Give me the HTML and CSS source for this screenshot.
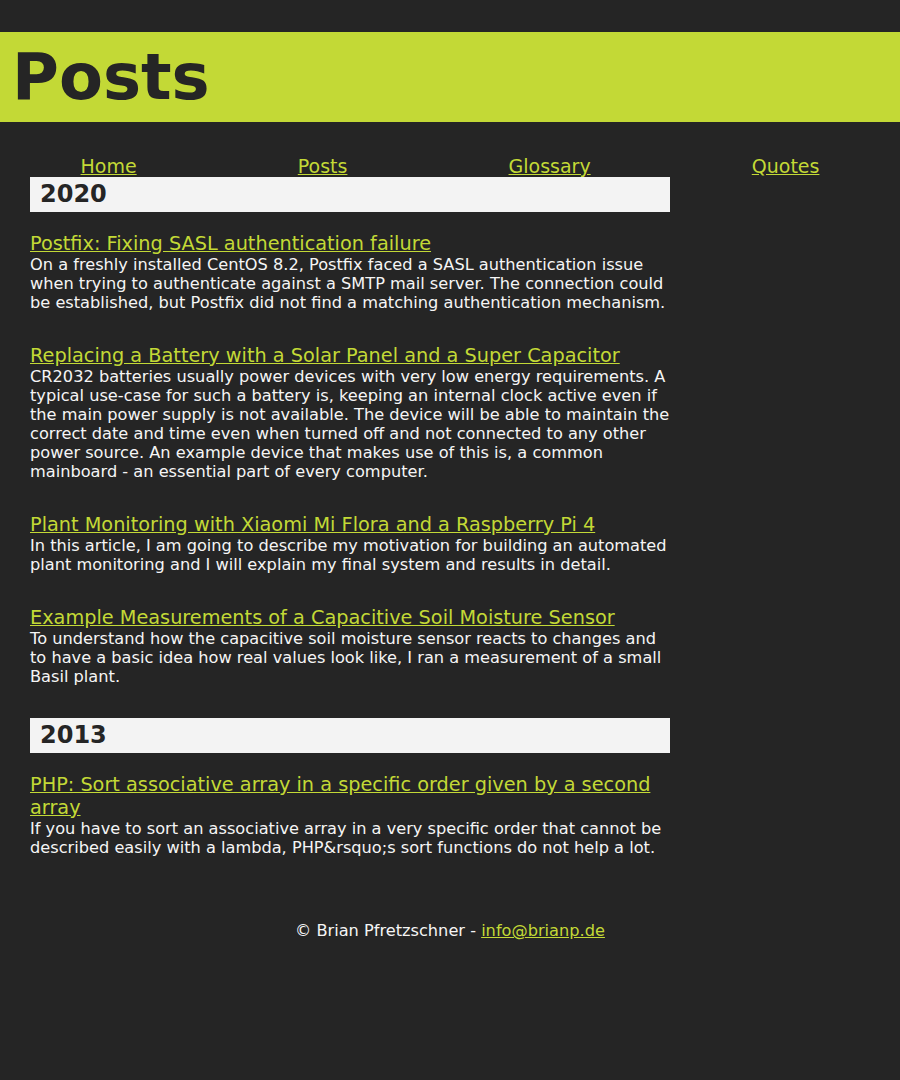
FILE: index.html
```html
<!DOCTYPE html>
<html lang="en">
<head>
<meta charset="utf-8">
<title>Posts</title>
<link rel="stylesheet" href="styles.css">
</head>
<body>
<header class="banner">
  <h1 class="banner-title">Posts</h1>
</header>
<nav class="nav">
  <a href="#">Home</a>
  <a href="#">Posts</a>
  <a href="#">Glossary</a>
  <a href="#">Quotes</a>
</nav>
<main class="content">
  <h2 class="year">2020</h2>
  <article class="post">
    <a class="post-title" href="#">Postfix: Fixing SASL authentication failure</a>
    <p class="post-text">On a freshly installed CentOS 8.2, Postfix faced a SASL authentication issue when trying to authenticate against a SMTP mail server. The connection could be established, but Postfix did not find a matching authentication mechanism.</p>
  </article>
  <article class="post">
    <a class="post-title" href="#">Replacing a Battery with a Solar Panel and a Super Capacitor</a>
    <p class="post-text">CR2032 batteries usually power devices with very low energy requirements. A typical use-case for such a battery is, keeping an internal clock active even if the main power supply is not available. The device will be able to maintain the correct date and time even when turned off and not connected to any other power source. An example device that makes use of this is, a common mainboard - an essential part of every computer.</p>
  </article>
  <article class="post">
    <a class="post-title" href="#">Plant Monitoring with Xiaomi Mi Flora and a Raspberry Pi 4</a>
    <p class="post-text">In this article, I am going to describe my motivation for building an automated plant monitoring and I will explain my final system and results in detail.</p>
  </article>
  <article class="post">
    <a class="post-title" href="#">Example Measurements of a Capacitive Soil Moisture Sensor</a>
    <p class="post-text">To understand how the capacitive soil moisture sensor reacts to changes and to have a basic idea how real values look like, I ran a measurement of a small Basil plant.</p>
  </article>
  <h2 class="year">2013</h2>
  <article class="post">
    <a class="post-title" href="#">PHP: Sort associative array in a specific order given by a second array</a>
    <p class="post-text">If you have to sort an associative array in a very specific order that cannot be described easily with a lambda, PHP&amp;rsquo;s sort functions do not help a lot.</p>
  </article>
</main>
<footer class="footer">
  © Brian Pfretzschner - <a href="#">info@brianp.de</a>
</footer>
</body>
</html>
```
FILE: styles.css
```css
html, body {
  margin: 0;
  padding: 0;
  background: #252525;
  color: #f5f5f5;
  font-family: "DejaVu Sans", Verdana, sans-serif;
}

a {
  color: #c3d936;
}

.banner {
  margin-top: 32px;
  height: 90px;
  background: #c3d936;
  display: flex;
  align-items: center;
  padding: 0 12px;
}

.banner-title {
  margin: 0;
  font-size: 64px;
  font-weight: bold;
  color: #252525;
  line-height: 1;
}

.nav {
  display: flex;
  justify-content: space-around;
  margin-top: 33px;
  font-size: 19px;
  line-height: 22px;
}

.content {
  width: 640px;
  margin: 0 30px;
}

.year {
  margin: 0 0 20px;
  background: #f3f3f3;
  color: #252525;
  font-size: 24px;
  line-height: 35px;
  padding: 0 10px;
}

.post {
  margin-bottom: 32px;
}

.post-title {
  display: block;
  font-size: 19.3px;
  line-height: 23px;
}

.post-text {
  margin: 0;
  font-size: 16.2px;
  line-height: 19px;
}

.footer {
  text-align: center;
  font-size: 16.2px;
  line-height: 19px;
  margin-top: 64px;
  padding-bottom: 140px;
}
```
